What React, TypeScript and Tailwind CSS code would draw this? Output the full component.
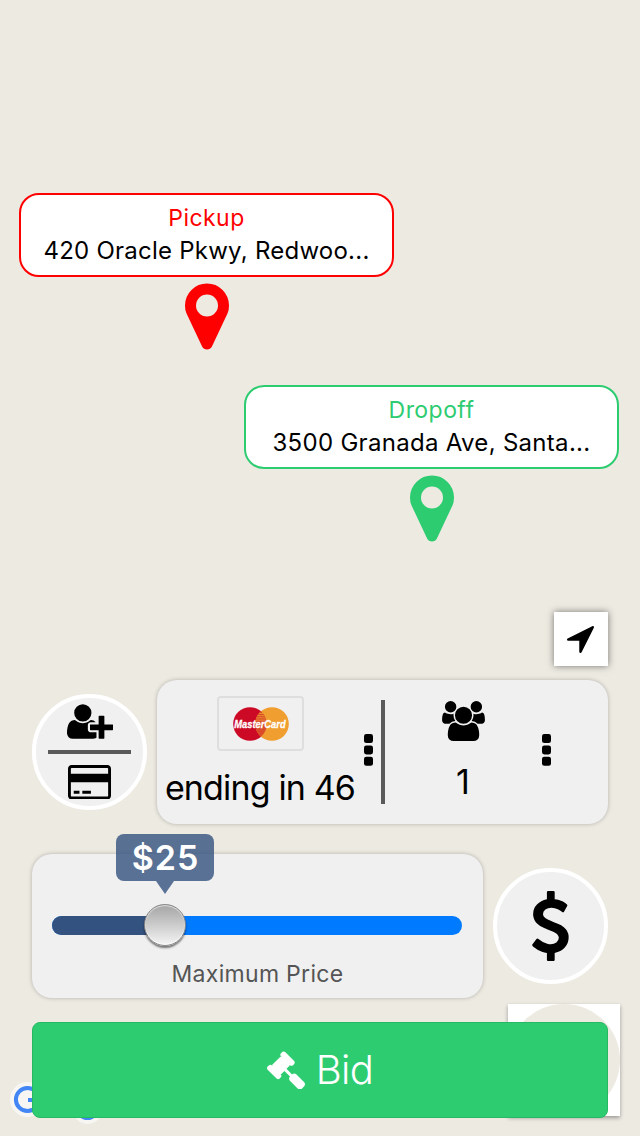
import type { ReactNode } from "react";

const PATHS = {
  marker:
    "M1152 640q0-106-75-181t-181-75-181 75-75 181 75 181 181 75 181-75 75-181zm256 0q0 109-33 179l-364 774q-16 33-47.5 52t-67.5 19-67.5-19-46.5-52l-365-774q-33-70-33-179 0-212 150-362t362-150 362 150 150 362z",
  arrow:
    "M1593 349l-640 1280q-17 35-57 35-5 0-15-2-22-5-35.5-22.5t-13.5-39.5v-576h-576q-22 0-39.5-13.5t-22.5-35.5 4-42 29-30l1280-640q13-7 29-7 27 0 45 19 15 14 18.5 34.5t-6.5 39.5z",
  userPlus:
    "M704 896q-159 0-271.5-112.5t-112.5-271.5 112.5-271.5 271.5-112.5 271.5 112.5 112.5 271.5-112.5 271.5-271.5 112.5zm960 128h352q13 0 22.5 9.5t9.5 22.5v192q0 13-9.5 22.5t-22.5 9.5h-352v352q0 13-9.5 22.5t-22.5 9.5h-192q-13 0-22.5-9.5t-9.5-22.5v-352h-352q-13 0-22.5-9.5t-9.5-22.5v-192q0-13 9.5-22.5t22.5-9.5h352v-352q0-13 9.5-22.5t22.5-9.5h192q13 0 22.5 9.5t9.5 22.5v352zm-736 224q0 52 38 90t90 38h256v238q-68 50-171 50h-874q-121 0-194-69t-73-190q0-53 3.5-103.5t14-109 26.5-108.5 43-97.5 62-81 85.5-53.5 111.5-20q19 0 39 17 79 61 154.5 91.5t164.5 30.5 164.5-30.5 154.5-91.5q20-17 39-17 132 0 217 96h-223q-52 0-90 38t-38 90v192z",
  card: "M1760 128q66 0 113 47t47 113v1216q0 66-47 113t-113 47h-1600q-66 0-113-47t-47-113v-1216q0-66 47-113t113-47h1600zm-1600 128q-13 0-22.5 9.5t-9.5 22.5v224h1664v-224q0-13-9.5-22.5t-22.5-9.5h-1600zm1600 1280q13 0 22.5-9.5t9.5-22.5v-608h-1664v608q0 13 9.5 22.5t22.5 9.5h1600zm-1504-128v-128h256v128h-256zm384 0v-128h384v128h-384z",
  users:
    "M593 896q-162 5-265 128h-134q-82 0-138-40.5t-56-118.5q0-353 124-353 6 0 43.5 21t97.5 42.5 119 21.5q67 0 133-23-5 37-5 66 0 139 81 256zm1071 637q0 120-73 189.5t-194 69.5h-874q-121 0-194-69.5t-73-189.5q0-53 3.5-103.5t14-109 26.5-108.5 43-97.5 62-81 85.5-53.5 111.5-20q10 0 43 21.5t73 48 107 48 135 21.5 135-21.5 107-48 73-48 43-21.5q61 0 111.5 20t85.5 53.5 62 81 43 97.5 26.5 108.5 14 109 3.5 103.5zm-1024-1277q0 106-75 181t-181 75-181-75-75-181 75-181 181-75 181 75 75 181zm704 384q0 159-112.5 271.5t-271.5 112.5-271.5-112.5-112.5-271.5 112.5-271.5 271.5-112.5 271.5 112.5 112.5 271.5zm576 225q0 78-56 118.5t-138 40.5h-134q-103-123-265-128 81-117 81-256 0-29-5-66 66 23 133 23 59 0 119-21.5t97.5-42.5 43.5-21q124 0 124 353zm-128-609q0 106-75 181t-181 75-181-75-75-181 75-181 181-75 181 75 75 181z",
  gavel:
    "M1771 1536q0 53-37 90l-107 108q-39 37-91 37-53 0-90-37l-363-364q-38-36-38-90 0-53 43-96l-256-256-126 126q-14 14-34 14t-34-14q2 2 12.5 12t12.5 13 10 11.5 10 13.5 6 13.5 5.5 16.5 1.5 18q0 38-28 68-3 3-16.5 18t-19 20.5-18.5 16.5-22 15.5-22 9-26 4.5q-40 0-68-28l-408-408q-28-28-28-68 0-13 4.5-26t9-22 15.5-22 16.5-18.5 20.5-19 18-16.5q30-28 68-28 10 0 18 1.5t16.5 5.5 13.5 6 13.5 10 11.5 10 13 12.5 12 12.5q-14-14-14-34t14-34l348-348q14-14 34-14t34 14q-2-2-12.5-12t-12.5-13-10-11.5-10-13.5-6-13.5-5.5-16.5-1.5-18q0-38 28-68 3-3 16.5-18t19-20.5 18.5-16.5 22-15.5 22-9 26-4.5q40 0 68 28l408 408q28 28 28 68 0 13-4.5 26t-9 22-15.5 22-16.5 18.5-20.5 19-18 16.5q-30 28-68 28-10 0-18-1.5t-16.5-5.5-13.5-6-13.5-10-11.5-10-13-12.5-12-12.5q14 14 14 34t-14 34l-126 126 256 256q43-43 96-43 52 0 91 37l363 363q37 39 37 91z",
  dollar:
    "M1362 1185q0 153-99.5 263.5t-258.5 136.5v175q0 14-9 23t-23 9h-135q-13 0-22.5-9.5t-9.5-22.5v-175q-66-9-127.5-31t-101.5-44.5-74-48-46.5-37.5-17.5-18q-17-21-2-41l103-135q7-10 23-12 15-2 24 9l2 2q113 99 243 125 37 8 74 8 81 0 142.5-43t61.5-122q0-28-15-53t-33.5-42-58.5-37.5-66-32-80-32.5q-39-16-61.5-25t-61.5-26.5-62.5-31-56.5-35.5-53.5-42.5-43.5-49-35.5-58-21-66.5-8.5-78q0-138 98-242t255-134v-180q0-13 9.5-22.5t22.5-9.5h135q14 0 23 9t9 23v176q57 6 110.5 23t87 33.5 63.5 37.5 39 29 15 14q17 18 5 38l-81 146q-8 15-23 16-14 3-27-7-3-3-14.5-12t-39-26.5-58.5-32-74.5-26-85.5-11.5q-95 0-155 43t-60 111q0 26 8.5 48t29.5 41.5 39.5 33 56 31 60.5 27 70 27.5q53 20 81 31.5t76 35 75.5 42.5 62 50 53 63.5 31.5 76.5 13 94z",
};

function Icon({ name, box, className }: { name: keyof typeof PATHS; box: string; className: string }) {
  return (
    <svg viewBox={box} className={`block shrink-0 ${className}`} fill="currentColor" aria-hidden="true">
      <path d={PATHS[name]} />
    </svg>
  );
}

function MapPin({ label, address, place, tone, border, spacing }: {
  label: string;
  address: string;
  place: string;
  tone: string;
  border: string;
  spacing: string;
}) {
  return (
    <div className={`absolute flex w-[375px] flex-col items-center gap-[6px] ${place}`}>
      <div className={`flex h-[84px] w-full flex-col items-center rounded-[20px] border-2 bg-white pt-[7px] whitespace-nowrap ${border}`}>
        <div className={`text-[23px] leading-8 tracking-[0.45px] ${tone}`}>{label}</div>
        <div className={`text-[24px] leading-[34px] text-black ${spacing}`}>{address}</div>
      </div>
      <Icon name="marker" box="384 128 1024 1536" className={`h-[67px] w-[44px] ${tone}`} />
    </div>
  );
}

function RoundButton({ children }: { children: ReactNode }) {
  return (
    <button className="flex h-[116px] w-[115px] shrink-0 flex-col items-center rounded-full border-4 border-white bg-[#f0f0f0]">
      {children}
    </button>
  );
}

function Ellipsis() {
  return (
    <svg viewBox="0 0 9 32" className="block h-8 w-[9px] shrink-0" aria-hidden="true">
      <rect width="9" height="9" rx="2.3" />
      <rect y="11.4" width="9" height="9" rx="2.3" />
      <rect y="22.8" width="9" height="9" rx="2.3" />
    </svg>
  );
}

function MasterCard() {
  return (
    <div className="flex h-[55px] w-[87px] items-center justify-center rounded-[4px] border-2 border-[#dedede]">
      <svg viewBox="-8 -6 72 46" className="block h-[46px] w-[72px] shrink-0" aria-hidden="true">
        <circle cx="17" cy="17" r="16.8" fill="#cc0a25" />
        <circle cx="39" cy="17" r="16.8" fill="#f09e2f" />
        <path d="M28 4.3a16.8 16.8 0 0 1 0 25.4a16.8 16.8 0 0 1 0-25.4z" fill="#d94b29" />
        <path d="M26 6.5h4M24.5 8.7h7M23.5 10.9h9M22.8 13.1h10" stroke="#f09e2f" strokeWidth="0.8" />
        <text
          x="1.2"
          y="20.8"
          textLength="51.5"
          lengthAdjust="spacingAndGlyphs"
          fill="#fff"
          stroke="#fff"
          strokeWidth="0.3"
          className="font-['Liberation_Sans',sans-serif] text-[11px] font-bold italic"
        >
          MasterCard
        </text>
      </svg>
    </div>
  );
}

const CARD = "rounded-[20px] bg-[#f0f0f0] shadow-[0_0_4px_rgba(0,0,0,0.25)]";

export default function App() {
  return (
    <main className="relative h-[1136px] w-[640px] overflow-hidden bg-[#edeae2] font-['Inter','Liberation_Sans',sans-serif] text-black">
      <MapPin
        label="Pickup"
        address="420 Oracle Pkwy, Redwoo..."
        place="left-[19px] top-[193px]"
        tone="text-[#ff0000]"
        border="border-[#ff0000]"
        spacing="tracking-[0.24px]"
      />
      <MapPin
        label="Dropoff"
        address="3500 Granada Ave, Santa..."
        place="left-[244px] top-[385px]"
        tone="text-[#2ecc71]"
        border="border-[#2ecc71]"
        spacing="tracking-[0.3px]"
      />

      <svg viewBox="0 0 110 50" className="absolute left-0 top-[1076px] h-[50px] w-[110px]" fill="none" aria-hidden="true">
        <circle cx="27.5" cy="23.5" r="17.5" fill="#f7f6f3" />
        <circle cx="27.5" cy="23.5" r="11.6" stroke="#4285f4" strokeWidth="4" />
        <path d="M28 24h12" stroke="#4285f4" strokeWidth="4" />
        <circle cx="87.5" cy="33" r="15" fill="#f7f6f3" />
        <circle cx="87.5" cy="32.5" r="9.5" stroke="#4285f4" strokeWidth="4" />
      </svg>
      <div className="absolute left-[508px] top-[1004px] size-28 bg-white shadow-[0_2px_4px_rgba(0,0,0,0.35)]">
        <div className="size-full rounded-full bg-[#edeae2]" />
      </div>

      <div className="relative flex h-full flex-col px-8 pt-[612px]">
        <button className="flex size-[54px] items-center justify-center self-end bg-white pt-px pr-[2px] shadow-[0_0_7px_rgba(0,0,0,0.5)]">
          <Icon name="arrow" box="192 256 1408 1408" className="size-[27px]" />
        </button>

        <div className="mt-[14px] flex items-center justify-between">
          <RoundButton>
            <Icon name="userPlus" box="0 128 2048 1536" className="mt-[6px] h-[35px] w-[46px]" />
            <span className="mt-[11px] h-1 w-[83px] bg-[#5a5a5a]" />
            <Icon name="card" box="0 128 1920 1536" className="mt-[10.5px] h-[34.5px] w-[43px]" />
          </RoundButton>
          <section className={`flex h-36 w-[451px] ${CARD}`}>
            <div className="flex w-[207px] flex-col items-center pt-4">
              <MasterCard />
              <div className="mt-[17px] mr-px text-[34px] leading-10 tracking-[-0.85px] whitespace-nowrap">ending in 46</div>
            </div>
            <div className="flex h-full items-center pb-1">
              <Ellipsis />
            </div>
            <div className="mt-5 ml-2 h-[104px] w-1 bg-[#5a5a5a]" />
            <div className="flex w-[157px] flex-col items-center pt-[21px]">
              <Icon name="users" box="0 0 1920 1792" className="h-10 w-[43px]" />
              <div className="mt-[21px] mr-px text-[34px] leading-10">1</div>
            </div>
            <div className="flex h-full items-center pb-1">
              <Ellipsis />
            </div>
          </section>
        </div>

        <div className="mt-[30px] flex items-center justify-between">
          <section className={`relative flex h-36 w-[451px] flex-col items-center pt-[62px] ${CARD}`}>
            <div className="mr-px h-[19px] w-[410px] overflow-hidden rounded-full bg-[#007aff]">
              <div className="h-full w-[113px] bg-[#34527f]" />
            </div>
            <div className="mt-[23px] text-[23px] leading-8 tracking-[0.3px] text-[#555]">Maximum Price</div>
            <div className="absolute top-[50px] left-[112px] size-[42px] rounded-full border border-[#888] bg-linear-to-b from-[#a5a5a5] to-[#f5f5f5] shadow-[0_2px_2px_rgba(0,0,0,0.5),inset_0_1px_1px_rgba(255,255,255,0.7),inset_0_-1px_1px_rgba(255,255,255,0.9)]" />
            <div className="absolute -top-5 left-[84px] flex w-[98px] flex-col items-center opacity-80">
              <div className="h-[47px] w-full rounded-lg bg-[#34527f]" />
              <svg viewBox="0 0 18 13" className="block h-[13px] w-[18px]" aria-hidden="true">
                <path d="M0 0h18L9 13z" fill="#34527f" />
              </svg>
            </div>
            <div className="absolute -top-5 left-[84px] w-[98px] pl-px text-center text-[34px] leading-[47px] font-[560] tracking-[0.9px] text-white">
              $25
            </div>
          </section>
          <RoundButton>
            <Icon name="dollar" box="430 0 934 1792" className="mt-[19px] h-[70px] w-[37px]" />
          </RoundButton>
        </div>

        <button className="mt-6 flex h-24 w-full items-center justify-center gap-[11px] rounded-lg border border-[#27b863] bg-[#2ecc71] text-white">
          <Icon name="gavel" box="40 21 1731 1750" className="h-[38.5px] w-[38px]" />
          <span className="text-[40px] leading-[48px] font-[350] tracking-[-0.6px]">Bid</span>
        </button>
      </div>
    </main>
  );
}
